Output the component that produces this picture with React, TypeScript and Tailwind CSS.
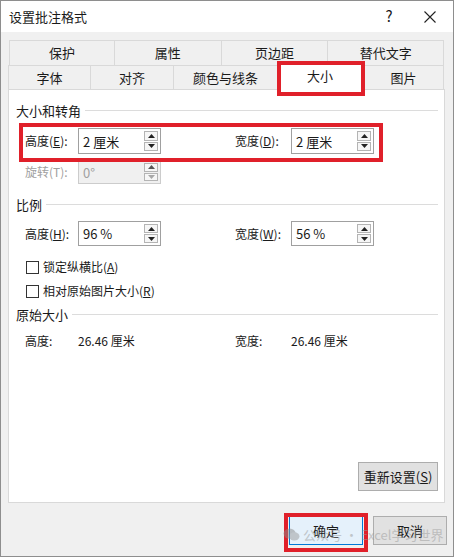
import React from 'react';

const font = { fontFamily: '"Noto Sans CJK SC", "Noto Sans", sans-serif' };

const Spin: React.FC<{ value: string; disabled?: boolean }> = ({ value, disabled }) => (
  <div
    className={`w-[83px] h-full border flex items-center pl-[4px] pr-[2px] ${
      disabled ? 'bg-[#f0f0f0] border-[#cccccc] text-[#a0a0a0]' : 'bg-white border-[#a0a0a0] text-[#1a1a1a]'
    }`}
  >
    <span className="flex-1 text-[13px] leading-none">{value}</span>
    <div className="flex flex-col w-[14px] h-[calc(100%-4px)] gap-[1px]">
      <div className="flex-1 border border-[#b4b4b4] bg-[#f6f6f6] flex items-center justify-center">
        <svg width="7" height="4" viewBox="0 0 7 4">
          <path d="M0 4 L3.5 0 L7 4 Z" fill={disabled ? '#555' : '#222'} />
        </svg>
      </div>
      <div className="flex-1 border border-[#b4b4b4] bg-[#f6f6f6] flex items-center justify-center">
        <svg width="7" height="4" viewBox="0 0 7 4">
          <path d="M0 0 L7 0 L3.5 4 Z" fill={disabled ? '#a8a8a8' : '#222'} />
        </svg>
      </div>
    </div>
  </div>
);

const Section: React.FC<{ title: string; className?: string }> = ({ title, className }) => (
  <div className={`flex items-center h-[16px] pl-[7px] pr-[6px] gap-[4px] ${className ?? ''}`}>
    <span className="text-[13px] leading-none text-[#1a1a1a]">{title}</span>
    <div className="flex-1 h-px bg-[#dcdcdc]" />
  </div>
);

const Label: React.FC<{ children: React.ReactNode; w: string; muted?: boolean }> = ({ children, w, muted }) => (
  <span className={`${w} text-[12px] leading-none ${muted ? 'text-[#a0a0a0]' : 'text-[#1a1a1a]'}`}>{children}</span>
);

const Check: React.FC<{ children: React.ReactNode; className?: string }> = ({ children, className }) => (
  <div className={`flex items-center h-[16px] pl-[17px] gap-[4px] ${className ?? ''}`}>
    <div className="w-[13px] h-[13px] border border-[#333] bg-white" />
    <span className="text-[12px] leading-none text-[#1a1a1a]">{children}</span>
  </div>
);

const Tab: React.FC<{ label: string; w: string; active?: boolean }> = ({ label, w, active }) => (
  <div
    className={`${w} flex items-center justify-center text-[13px] text-[#1a1a1a] border-[#d9d9d9] ${
      active ? 'bg-white h-[29px] border-l border-r border-t -mb-px z-10' : 'h-full border-l border-t'
    }`}
  >
    {label}
  </div>
);

export default function App() {
  return (
    <div style={font} className="w-[454px] h-[557px] bg-[#f0f0f0] border border-[#8e8e8e] flex flex-col relative overflow-hidden">
      {/* title bar */}
      <div className="h-[31px] bg-white flex items-center pl-[8px] shrink-0">
        <span className="text-[13px] text-[#1a1a1a] flex-1">设置批注格式</span>
        <span className="text-[15px] text-[#1a1a1a] w-[20px] text-center mr-[25px]">?</span>
        <svg width="12" height="12" viewBox="0 0 12 12" className="mr-[17px]">
          <path d="M0.5 0.5 L11.5 11.5 M11.5 0.5 L0.5 11.5" stroke="#222" strokeWidth="1.1" />
        </svg>
      </div>

      <div className="flex-1 flex flex-col px-[7px] pt-[8px]">
        {/* tabs */}
        <div className="flex h-[25px] ml-[1px] mr-[2px] border-r border-[#d9d9d9]">
          <Tab label="保护" w="w-[105px]" />
          <Tab label="属性" w="w-[107px]" />
          <Tab label="页边距" w="w-[107px]" />
          <Tab label="替代文字" w="w-[116px]" />
        </div>
        <div className="flex h-[24px] items-end border-r border-[#d9d9d9] mr-[2px]">
          <Tab label="字体" w="w-[82px]" />
          <Tab label="对齐" w="w-[83px]" />
          <Tab label="颜色与线条" w="w-[104px]" />
          <Tab label="大小" w="w-[86px]" active />
          <Tab label="图片" w="w-[80px]" />
        </div>

        {/* panel */}
        <div className="h-[414px] bg-white border border-[#d9d9d9] mr-[1px] flex flex-col">
          <Section title="大小和转角" className="mt-[12px]" />
          <div className="flex items-center h-[26px] mt-[10px] pl-[16px]">
            <Label w="w-[53px]">高度(<u>E</u>):</Label>
            <Spin value="2 厘米" />
            <div className="w-[74px]" />
            <Label w="w-[56px]">宽度(<u>D</u>):</Label>
            <Spin value="2 厘米" />
          </div>
          <div className="flex items-center h-[24px] mt-[6px] pl-[16px]">
            <Label w="w-[53px]" muted>旋转(T):</Label>
            <Spin value="0°" disabled />
          </div>

          <Section title="比例" className="mt-[12px]" />
          <div className="flex items-center h-[25px] mt-[9px] pl-[16px]">
            <Label w="w-[53px]">高度(<u>H</u>):</Label>
            <Spin value="96 %" />
            <div className="w-[74px]" />
            <Label w="w-[56px]">宽度(<u>W</u>):</Label>
            <Spin value="56 %" />
          </div>
          <Check className="mt-[13px]">锁定纵横比(<u>A</u>)</Check>
          <Check className="mt-[8px]">相对原始图片大小(<u>R</u>)</Check>

          <Section title="原始大小" className="mt-[7px]" />
          <div className="flex items-center h-[16px] mt-[11px] pl-[16px] text-[12px] text-[#1a1a1a] leading-none">
            <span className="w-[53px]">高度:</span>
            <span className="w-[157px]">26.46 厘米</span>
            <span className="w-[56px]">宽度:</span>
            <span>26.46 厘米</span>
          </div>

          <div className="flex-1" />
          <div className="flex justify-end mr-[6px] mb-[11px]">
            <button className="w-[80px] h-[29px] bg-[#e1e1e1] border border-[#adadad] text-[13px] text-[#1a1a1a]">
              重新设置(<u>S</u>)
            </button>
          </div>
        </div>

        {/* footer */}
        <div className="flex justify-end gap-[10px] mt-[13px] -mr-[1px]">
          <button className="w-[74px] h-[29px] bg-[#e5f1fb] border border-[#0078d7] text-[13px] text-[#1a1a1a]">确定</button>
          <button className="w-[74px] h-[29px] bg-[#e1e1e1] border border-[#adadad] text-[13px] text-[#1a1a1a]">取消</button>
        </div>
      </div>

      {/* red annotation boxes */}
      <div className="absolute left-[276px] top-[60px] w-[88px] h-[35px] border-[4px] border-[#e0202a] pointer-events-none z-20" />
      <div className="absolute left-[18px] top-[122px] w-[364px] h-[39px] border-[4px] border-[#e0202a] pointer-events-none z-20" />
      <div className="absolute left-[283px] top-[512px] w-[84px] h-[39px] border-[4px] border-[#e0202a] pointer-events-none z-20" />

      {/* watermark */}
      <div className="absolute left-[282px] top-[526px] flex items-center gap-[3px] whitespace-nowrap pointer-events-none z-30 opacity-50">
        <svg width="17" height="15" viewBox="0 0 18 16">
          <ellipse cx="7" cy="7" rx="6.5" ry="5.5" fill="#8a8a8a" />
          <ellipse cx="12" cy="10" rx="5.5" ry="4.5" fill="#9a9a9a" />
        </svg>
        <span className="text-[13px] leading-none text-[#9a9a9a]">公众号 · Excel学习世界</span>
      </div>
    </div>
  );
}
